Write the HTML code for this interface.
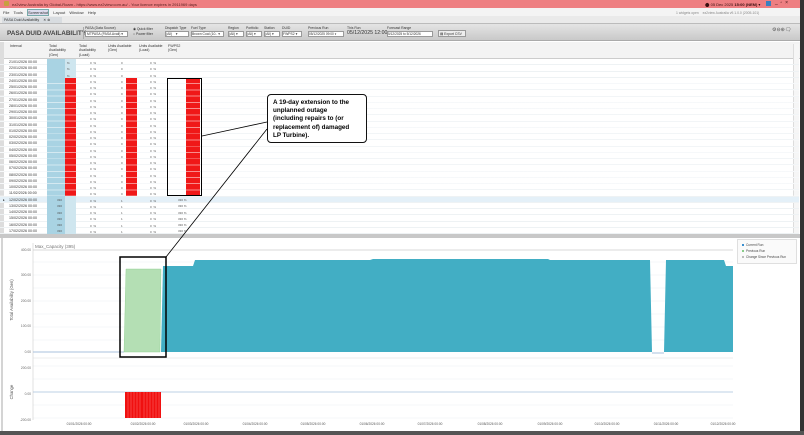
<!DOCTYPE html>
<html><head><meta charset="utf-8">
<style>
*{margin:0;padding:0;box-sizing:border-box}
body{width:804px;height:435px;overflow:hidden;background:#fff;font-family:"Liberation Sans",sans-serif;position:relative;font-size:4px;color:#333}
.a{position:absolute}
.r{position:absolute;left:0;width:799px;height:6.25px;border-bottom:1px solid #eef2f4}
.r span{position:absolute;top:1px;font-size:3.6px;line-height:4px}
.bl{position:absolute;left:47px;width:18px;height:6px;background:#a9d3e3}
.rd{position:absolute;height:6px;background:#f01818}
</style></head><body>
<div class="a" style="left:0;top:0;width:804px;height:8px;background:#ee7f82"></div>
<div class="a" style="left:4px;top:1px;width:5px;height:5px;background:#c8a040;border-radius:1px"></div>
<div class="a" style="left:12px;top:1.5px;font-size:4px;color:#5a2020">ez2view Australia by Global-Roam - https://www.ez2view.com.au/ - Your licence expires in 2911969 days</div>
<div class="a" style="left:705px;top:1.5px;font-size:4px;color:#3a1010">⬤ 05 Dec 2025 <b>15:00 (NEM)</b> ▾</div>
<div class="a" style="left:766px;top:1px;width:5px;height:5px;background:#3a80c0"></div>
<div class="a" style="left:775px;top:0;font-size:5px;color:#3a1010">_ &nbsp;▫ &nbsp;×</div>
<div class="a" style="left:0;top:8px;width:804px;height:8px;background:#f4f4f4"></div>
<div class="a" style="left:3px;top:10px;font-size:4px;color:#333;word-spacing:3px">File Tools <span style="border:1px solid #7aa;background:#dde">Screenshot</span> Layout Window Help</div>
<div class="a" style="left:676px;top:11px;font-size:3.4px;color:#888">1 widgets open &nbsp;&nbsp; ez2view Australia v9.1.0.0 (2005-101)</div>
<div class="a" style="left:0;top:16px;width:804px;height:7px;background:#eaeaea"></div>
<div class="a" style="left:2px;top:16.5px;width:60px;height:6px;background:#d8dce0;font-size:3.6px;padding:1px 2px">PASA Duid Availability &nbsp;&nbsp; ✕ ⊗</div>
<div class="a" style="left:0;top:23px;width:800px;height:18px;background:linear-gradient(#e4e4e4,#c9c9c9);border-top:1px solid #bbb;border-bottom:1px solid #aaa"></div>
<div class="a" style="left:7px;top:29.5px;font-size:6.4px;font-weight:bold;color:#444;white-space:nowrap">PASA DUID AVAILABILITY</div>
<div class="a" style="left:83px;top:27px;width:1px;height:12px;background:#aaa"></div>
<div class="a" style="left:85px;top:26px;font-size:3.4px;color:#333">PASA (Data Source)</div>
<div class="a" style="left:85px;top:31px;width:43px;height:6px;background:#fff;border:1px solid #999;font-size:3.4px;padding:0 1px">MTPASA (PASA Avail) ▾</div>
<div class="a" style="left:133px;top:27px;font-size:3.4px;line-height:5px;color:#333">◉ Quick filter<br>○ Power filter</div>
<div class="a" style="left:165px;top:26px;font-size:3.4px">Dispatch Type</div>
<div class="a" style="left:165px;top:31px;width:24px;height:6px;background:#fff;border:1px solid #999;font-size:3.4px">(All) &nbsp;&nbsp; ▾</div>
<div class="a" style="left:191px;top:26px;font-size:3.4px">Fuel Type</div>
<div class="a" style="left:191px;top:31px;width:33px;height:6px;background:#fff;border:1px solid #999;font-size:3.4px">Brown Coal (10.. ▾</div>
<div class="a" style="left:228px;top:26px;font-size:3.4px">Region</div>
<div class="a" style="left:228px;top:31px;width:16px;height:6px;background:#fff;border:1px solid #999;font-size:3.4px">(All) ▾</div>
<div class="a" style="left:246px;top:26px;font-size:3.4px">Portfolio</div>
<div class="a" style="left:246px;top:31px;width:16px;height:6px;background:#fff;border:1px solid #999;font-size:3.4px">(All) ▾</div>
<div class="a" style="left:264px;top:26px;font-size:3.4px">Station</div>
<div class="a" style="left:264px;top:31px;width:16px;height:6px;background:#fff;border:1px solid #999;font-size:3.4px">(All) ▾</div>
<div class="a" style="left:282px;top:26px;font-size:3.4px">DUID</div>
<div class="a" style="left:282px;top:31px;width:20px;height:6px;background:#fff;border:1px solid #999;font-size:3.4px">FWPS2 ▾</div>
<div class="a" style="left:308px;top:26px;font-size:3.4px">Previous Run</div>
<div class="a" style="left:308px;top:31px;width:36px;height:6px;background:#fff;border:1px solid #999;font-size:3.2px">05/12/2025 09:00 ▾</div>
<div class="a" style="left:347px;top:26px;font-size:3.4px">This Run</div>
<div class="a" style="left:347px;top:30px;font-size:5.2px">05/12/2025 12:00</div>
<div class="a" style="left:387px;top:26px;font-size:3.4px">Forecast Range</div>
<div class="a" style="left:387px;top:31px;width:46px;height:6px;background:#fff;border:1px solid #999;font-size:3.2px">5/12/2025 to 5/12/2026</div>
<div class="a" style="left:438px;top:30px;width:28px;height:7px;background:#eee;border:1px solid #999;font-size:3.4px;padding:1px">▤ Export CSV</div>
<div class="a" style="left:772px;top:27px;font-size:5px;color:#555">⚙⊖⊕🗨</div>
<div class="a" style="left:0;top:42px;width:800px;height:17px;background:#f3f3f3;border-bottom:1px solid #ccc"></div>
<div class="a" style="left:0;top:42px;width:4px;height:192px;background:#ddd"></div>
<div class="a" style="left:10px;top:44px;font-size:3.6px;line-height:4.4px">Interval</div>
<div class="a" style="left:49px;top:44px;font-size:3.6px;line-height:4.4px">Total<br>Availability<br>(Gen)</div>
<div class="a" style="left:79px;top:44px;font-size:3.6px;line-height:4.4px">Total<br>Availability<br>(Load)</div>
<div class="a" style="left:108px;top:44px;font-size:3.6px;line-height:4.4px">Units Available<br>(Gen)</div>
<div class="a" style="left:139px;top:44px;font-size:3.6px;line-height:4.4px">Units Available<br>(Load)</div>
<div class="a" style="left:168px;top:44px;font-size:3.6px;line-height:4.4px">FWPS2<br>(Gen)</div>
<div class="a" style="left:793px;top:44px;width:6px;height:189px;background:#f6f6f6;border-left:1px solid #ddd"></div>
<div class="a" style="left:0;top:59px;width:800px;height:175px">
<div class="r" style="top:0"><span style="left:9px">21/01/2026 00:00</span></div>
<div class="r" style="top:6.25px"><span style="left:9px">22/01/2026 00:00</span></div>
<div class="r" style="top:12.5px"><span style="left:9px">23/01/2026 00:00</span></div>
<div class="r" style="top:18.75px"><span style="left:9px">24/01/2026 00:00</span></div>
<div class="r" style="top:25px"><span style="left:9px">25/01/2026 00:00</span></div>
<div class="r" style="top:31.25px"><span style="left:9px">26/01/2026 00:00</span></div>
<div class="r" style="top:37.5px"><span style="left:9px">27/01/2026 00:00</span></div>
<div class="r" style="top:43.75px"><span style="left:9px">28/01/2026 00:00</span></div>
<div class="r" style="top:50px"><span style="left:9px">29/01/2026 00:00</span></div>
<div class="r" style="top:56.25px"><span style="left:9px">30/01/2026 00:00</span></div>
<div class="r" style="top:62.5px"><span style="left:9px">31/01/2026 00:00</span></div>
<div class="r" style="top:68.75px"><span style="left:9px">01/02/2026 00:00</span></div>
<div class="r" style="top:75px"><span style="left:9px">02/02/2026 00:00</span></div>
<div class="r" style="top:81.25px"><span style="left:9px">03/02/2026 00:00</span></div>
<div class="r" style="top:87.5px"><span style="left:9px">04/02/2026 00:00</span></div>
<div class="r" style="top:93.75px"><span style="left:9px">05/02/2026 00:00</span></div>
<div class="r" style="top:100px"><span style="left:9px">06/02/2026 00:00</span></div>
<div class="r" style="top:106.25px"><span style="left:9px">07/02/2026 00:00</span></div>
<div class="r" style="top:112.5px"><span style="left:9px">08/02/2026 00:00</span></div>
<div class="r" style="top:118.75px"><span style="left:9px">09/02/2026 00:00</span></div>
<div class="r" style="top:125px"><span style="left:9px">10/02/2026 00:00</span></div>
<div class="r" style="top:131.25px"><span style="left:9px">11/02/2026 00:00</span></div>
<div class="r" style="top:137.5px;background:#e4f0f8"><span style="left:3px">▸</span><span style="left:9px">12/02/2026 00:00</span></div>
<div class="r" style="top:143.75px"><span style="left:9px">13/02/2026 00:00</span></div>
<div class="r" style="top:150px"><span style="left:9px">14/02/2026 00:00</span></div>
<div class="r" style="top:156.25px"><span style="left:9px">15/02/2026 00:00</span></div>
<div class="r" style="top:162.5px"><span style="left:9px">16/02/2026 00:00</span></div>
<div class="r" style="top:168.75px"><span style="left:9px">17/02/2026 00:00</span></div>
<div class="bl" style="top:0;height:175px;background:#a9d3e3"></div>
<div class="a" style="left:65px;top:0;width:11px;height:19px;background:#cfe6ef"></div>
<div class="rd" style="left:65px;top:19px;width:11px;height:118px"></div>
<div class="a" style="left:65px;top:137px;width:11px;height:38px;background:#cfe6ef"></div>
<div class="rd" style="left:126px;top:19px;width:11px;height:118px"></div>
<div class="rd" style="left:186px;top:19px;width:14px;height:118px"></div>
<div class="a" style="left:0;top:19px;width:800px;height:118px;background:repeating-linear-gradient(transparent 0,transparent 5.25px,rgba(255,255,255,.5) 5.25px,rgba(255,255,255,.5) 6.25px)"></div>
<div class="a" style="left:0;top:0;width:800px;height:175px;font-size:3px;color:#555">
<div class="a" style="left:90px;top:1px;line-height:6.25px">0 &nbsp;%<br>0 &nbsp;%<br>0 &nbsp;%<br>0 &nbsp;%<br>0 &nbsp;%<br>0 &nbsp;%<br>0 &nbsp;%<br>0 &nbsp;%<br>0 &nbsp;%<br>0 &nbsp;%<br>0 &nbsp;%<br>0 &nbsp;%<br>0 &nbsp;%<br>0 &nbsp;%<br>0 &nbsp;%<br>0 &nbsp;%<br>0 &nbsp;%<br>0 &nbsp;%<br>0 &nbsp;%<br>0 &nbsp;%<br>0 &nbsp;%<br>0 &nbsp;%<br>0 &nbsp;%<br>0 &nbsp;%<br>0 &nbsp;%<br>0 &nbsp;%<br>0 &nbsp;%<br>0 &nbsp;%</div>
<div class="a" style="left:150px;top:1px;line-height:6.25px">0 &nbsp;%<br>0 &nbsp;%<br>0 &nbsp;%<br>0 &nbsp;%<br>0 &nbsp;%<br>0 &nbsp;%<br>0 &nbsp;%<br>0 &nbsp;%<br>0 &nbsp;%<br>0 &nbsp;%<br>0 &nbsp;%<br>0 &nbsp;%<br>0 &nbsp;%<br>0 &nbsp;%<br>0 &nbsp;%<br>0 &nbsp;%<br>0 &nbsp;%<br>0 &nbsp;%<br>0 &nbsp;%<br>0 &nbsp;%<br>0 &nbsp;%<br>0 &nbsp;%<br>0 &nbsp;%<br>0 &nbsp;%<br>0 &nbsp;%<br>0 &nbsp;%<br>0 &nbsp;%<br>0 &nbsp;%</div>
<div class="a" style="left:67px;top:1px;line-height:6.25px">%<br>%<br>%</div>
<div class="a" style="left:121px;top:1px;line-height:6.25px">0<br>0<br>0<br>0<br>0<br>0<br>0<br>0<br>0<br>0<br>0<br>0<br>0<br>0<br>0<br>0<br>0<br>0<br>0<br>0<br>0<br>0<br>1<br>1<br>1<br>1<br>1<br>1</div>
<div class="a" style="left:57px;top:138px;line-height:6.25px">330<br>330<br>330<br>330<br>330<br>330</div>
<div class="a" style="left:178px;top:138px;line-height:6.25px">330 %<br>330 %<br>330 %<br>330 %<br>330 %<br>330 %</div>
</div>
</div>
<div class="a" style="left:167px;top:78px;width:35px;height:118px;border:1.5px solid #000"></div>
<div class="a" style="left:0;top:234px;width:800px;height:4px;background:#c8c8c8"></div>
<div class="a" style="left:800px;top:0;width:4px;height:435px;background:#333"></div>
<div class="a" style="left:0;top:431px;width:804px;height:4px;background:#555"></div>
<svg class="a" style="left:0;top:238px" width="800" height="193" viewBox="0 238 800 193">
<rect x="0" y="238" width="800" height="193" fill="#fff"/>
<line x1="2" y1="238" x2="2" y2="431" stroke="#aaa"/>
<g stroke="#eef0f2" stroke-width="0.6">
<line x1="33" y1="262" x2="733" y2="262"/><line x1="33" y1="275" x2="733" y2="275"/><line x1="33" y1="288" x2="733" y2="288"/><line x1="33" y1="301" x2="733" y2="301"/><line x1="33" y1="314" x2="733" y2="314"/><line x1="33" y1="327" x2="733" y2="327"/><line x1="33" y1="340" x2="733" y2="340"/>
<line x1="33" y1="366" x2="733" y2="366"/><line x1="33" y1="379" x2="733" y2="379"/><line x1="33" y1="405" x2="733" y2="405"/><line x1="33" y1="418" x2="733" y2="418"/>
</g>
<line x1="33" y1="250" x2="733" y2="250" stroke="#ccc" stroke-width="0.8"/>
<line x1="33" y1="243" x2="33" y2="420" stroke="#ccc" stroke-width="0.6"/>
<line x1="33" y1="358" x2="733" y2="358" stroke="#ddd" stroke-width="0.6"/>
<text x="35" y="248" font-size="4.5" fill="#777" font-family="Liberation Sans">Max_Capacity (395)</text>
<g font-size="3.3" fill="#666" font-family="Liberation Sans" text-anchor="end">
<text x="31" y="251">400.00</text><text x="31" y="276">300.00</text><text x="31" y="302">200.00</text><text x="31" y="327">100.00</text><text x="31" y="353">0.00</text>
<text x="31" y="369">200.00</text><text x="31" y="395">0.00</text><text x="31" y="421">-200.00</text>
</g>
<text x="13" y="300" font-size="4.2" fill="#555" transform="rotate(-90 13 300)" text-anchor="middle" font-family="Liberation Sans">Total Availability (Gen)</text>
<text x="13" y="392" font-size="4.2" fill="#555" transform="rotate(-90 13 392)" text-anchor="middle" font-family="Liberation Sans">Change</text>
<line x1="33" y1="352" x2="124" y2="352" stroke="#a8c0dc" stroke-width="1"/>
<polygon points="124,352 126,269 161,269 160,352" fill="#b4dfb4" stroke="#8c8" stroke-width="0.4"/>
<polygon points="161,352 163,266 193,266 195,260 370,260 373,259 548,259 550,260 650,260 652,352" fill="#42aec4"/>
<polygon points="664,352 666,260 724,260 726,266 733,266 733,352" fill="#42aec4"/>
<line x1="652" y1="353" x2="664" y2="353" stroke="#a8c0dc" stroke-width="1"/>
<line x1="33" y1="392" x2="733" y2="392" stroke="#a8c0dc" stroke-width="0.8"/>
<rect x="125" y="392" width="36" height="26" fill="#f01010"/>
<g stroke="#ff9090" stroke-width="0.4"><line x1="128" y1="392" x2="128" y2="418"/><line x1="131" y1="392" x2="131" y2="418"/><line x1="134" y1="392" x2="134" y2="418"/><line x1="137" y1="392" x2="137" y2="418"/><line x1="140" y1="392" x2="140" y2="418"/><line x1="144" y1="392" x2="144" y2="418"/><line x1="147" y1="392" x2="147" y2="418"/><line x1="150" y1="392" x2="150" y2="418"/><line x1="153" y1="392" x2="153" y2="418"/><line x1="156" y1="392" x2="156" y2="418"/><line x1="159" y1="392" x2="159" y2="418"/></g>
<g font-size="3.2" fill="#555" font-family="Liberation Sans" text-anchor="middle">
<text x="79" y="425">01/01/2026 00:00</text><text x="143" y="425">01/02/2026 00:00</text><text x="196" y="425">01/03/2026 00:00</text><text x="255" y="425">01/04/2026 00:00</text><text x="313" y="425">01/05/2026 00:00</text><text x="372" y="425">01/06/2026 00:00</text><text x="430" y="425">01/07/2026 00:00</text><text x="490" y="425">01/08/2026 00:00</text><text x="550" y="425">01/09/2026 00:00</text><text x="607" y="425">01/10/2026 00:00</text><text x="666" y="425">01/11/2026 00:00</text><text x="723" y="425">01/12/2026 00:00</text>
</g>
<rect x="737.5" y="239.5" width="59" height="24" fill="#fafafa" stroke="#ccc" stroke-width="0.6"/>
<g font-size="3.2" fill="#444" font-family="Liberation Sans">
<rect x="742" y="244" width="2" height="2" fill="#3a8fd0"/><text x="746" y="246">Current Run</text>
<rect x="742" y="250" width="2" height="2" fill="#8c8"/><text x="746" y="252">Previous Run</text>
<rect x="742" y="256" width="2" height="2" fill="#bbb"/><text x="746" y="258">Change Since Previous Run</text>
</g>
<rect x="120" y="257" width="46" height="100" fill="none" stroke="#000" stroke-width="1.5"/>
</svg>
<svg class="a" style="left:0;top:0" width="804" height="435">
<line x1="202" y1="136" x2="267" y2="122" stroke="#000" stroke-width="0.8"/>
<line x1="166" y1="257" x2="267" y2="129" stroke="#000" stroke-width="0.8"/>
</svg>
<div class="a" style="left:267px;top:94px;width:100px;height:49px;background:#fff;border:1.2px solid #111;border-radius:4px;padding:4px 0 0 5px;font-size:6.3px;font-weight:bold;line-height:8.2px;color:#000;white-space:nowrap">A 19-day extension to the<br>unplanned outage<br>(including repairs to (or<br>replacement of) damaged<br>LP Turbine).</div>
</body></html>
